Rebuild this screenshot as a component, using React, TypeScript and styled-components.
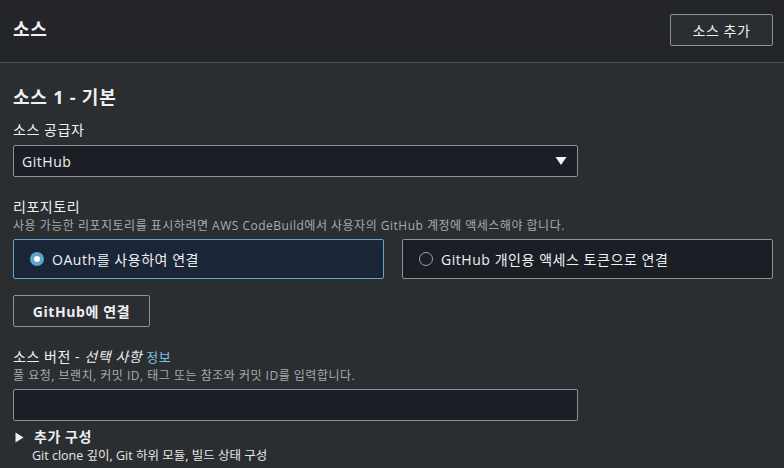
import React from 'react';
import styled, { createGlobalStyle } from 'styled-components';

const GlobalStyle = createGlobalStyle`
  html, body {
    margin: 0;
    padding: 0;
    background: #2b2e31;
  }
  body {
    font-family: "Open Sans", "Noto Sans CJK KR", sans-serif;
    color: #eef0f1;
    letter-spacing: 0.55px;
  }
`;

const Page = styled.div`
  width: 784px;
  height: 468px;
  overflow: hidden;
  background: #2b2e31;
`;

const Header = styled.div`
  box-sizing: border-box;
  height: 63px;
  padding: 0 11px 0 13px;
  display: flex;
  align-items: center;
  justify-content: space-between;
  background: #232529;
  border-bottom: 1px solid #4b4e52;
`;

const HeaderTitle = styled.h2`
  margin: 0 0 4px;
  font-size: 18px;
  font-weight: 700;
  line-height: 22px;
  letter-spacing: 0.8px;
`;

const Button = styled.button<{ $bold?: boolean; $width: number }>`
  box-sizing: border-box;
  width: ${(p) => p.$width}px;
  height: 32px;
  padding: 0;
  background: #2a2d31;
  border: 1px solid #8d9096;
  border-radius: 2px;
  color: #eef0f1;
  font-family: inherit;
  font-size: 14px;
  letter-spacing: 0.6px;
  font-weight: ${(p) => (p.$bold ? 700 : 400)};
  cursor: pointer;
`;

const HeaderButton = styled(Button)`
  margin-bottom: 2px;
`;

const Body = styled.div`
  padding: 23px 11px 0 13px;
  display: flex;
  flex-direction: column;
`;

const SectionTitle = styled.h3`
  margin: 0;
  font-size: 18px;
  font-weight: 700;
  line-height: 22px;
  letter-spacing: 0.8px;
`;

const Label = styled.div<{ $top: number }>`
  margin-top: ${(p) => p.$top}px;
  font-size: 14px;
  line-height: 20px;
`;

const Italic = styled.i`
  font-style: italic;
`;

const InfoLink = styled.a`
  color: #7fc0e0;
  font-size: 13px;
  margin-left: 4px;
  text-decoration: none;
`;

const Desc = styled.div`
  font-size: 12px;
  line-height: 18px;
  color: #a7abb0;
  letter-spacing: 0.5px;
`;

const Field = styled.div<{ $top: number }>`
  box-sizing: border-box;
  margin-top: ${(p) => p.$top}px;
  width: 565px;
  height: 32px;
  padding: 0 10px 0 8px;
  display: flex;
  align-items: center;
  justify-content: space-between;
  background: #1c1e25;
  border: 1px solid #8d9096;
  border-radius: 2px;
  font-size: 14px;
`;

const Cards = styled.div`
  margin-top: 4px;
  display: grid;
  grid-template-columns: 371px 371px;
  gap: 18px;
`;

const Card = styled.div<{ $selected?: boolean }>`
  box-sizing: border-box;
  height: 40px;
  padding: 0 16px;
  display: flex;
  align-items: center;
  gap: 8px;
  background: ${(p) => (p.$selected ? '#1b2538' : '#1c1e25')};
  border: 1px solid ${(p) => (p.$selected ? '#64a6c9' : '#8d9096')};
  border-radius: 2px;
  font-size: 14px;
`;

const Radio = styled.span<{ $checked?: boolean }>`
  box-sizing: border-box;
  width: 14px;
  height: 14px;
  border-radius: 50%;
  flex: none;
  display: flex;
  align-items: center;
  justify-content: center;
  background: ${(p) => (p.$checked ? '#5ea5cb' : 'transparent')};
  border: ${(p) => (p.$checked ? 'none' : '1.5px solid #9ea2a7')};

  &::after {
    content: '';
    display: ${(p) => (p.$checked ? 'block' : 'none')};
    width: 6px;
    height: 6px;
    border-radius: 50%;
    background: #ffffff;
  }
`;

const ActionRow = styled.div`
  margin-top: 16px;
`;

const Expander = styled.div`
  margin-top: 6px;
  display: flex;
  flex-direction: column;
`;

const ExpanderTitle = styled.div`
  display: flex;
  align-items: center;
  gap: 10px;
  font-size: 14px;
  font-weight: 700;
  line-height: 20px;
  padding-left: 2px;
`;

const ExpanderDesc = styled(Desc)`
  padding-left: 19px;
  color: #e4e6e8;
  font-size: 12.5px;
  letter-spacing: 0;
`;

const Caret = ({ dir }: { dir: 'down' | 'right' }) =>
  dir === 'down' ? (
    <svg width="12" height="10" viewBox="0 0 12 10">
      <path d="M0.5 1 L11.5 1 L6 9 Z" fill="#f2f3f4" />
    </svg>
  ) : (
    <svg width="9" height="11" viewBox="0 0 9 11">
      <path d="M0.5 0.5 L8.5 5.5 L0.5 10.5 Z" fill="#f2f3f4" />
    </svg>
  );

export default function App() {
  return (
    <Page>
      <GlobalStyle />
      <Header>
        <HeaderTitle>소스</HeaderTitle>
        <HeaderButton $width={103}>소스 추가</HeaderButton>
      </Header>
      <Body>
        <SectionTitle>소스 1 - 기본</SectionTitle>

        <Label $top={12}>소스 공급자</Label>
        <Field $top={5}>
          <span>GitHub</span>
          <Caret dir="down" />
        </Field>

        <Label $top={20}>리포지토리</Label>
        <Desc>사용 가능한 리포지토리를 표시하려면 AWS CodeBuild에서 사용자의 GitHub 계정에 액세스해야 합니다.</Desc>
        <Cards>
          <Card $selected>
            <Radio $checked />
            <span>OAuth를 사용하여 연결</span>
          </Card>
          <Card>
            <Radio />
            <span>GitHub 개인용 액세스 토큰으로 연결</span>
          </Card>
        </Cards>

        <ActionRow>
          <Button $bold $width={137}>GitHub에 연결</Button>
        </ActionRow>

        <Label $top={20}>
          소스 버전 - <Italic>선택 사항</Italic>
          <InfoLink>정보</InfoLink>
        </Label>
        <Desc>풀 요청, 브랜치, 커밋 ID, 태그 또는 참조와 커밋 ID를 입력합니다.</Desc>
        <Field $top={4} />

        <Expander>
          <ExpanderTitle>
            <Caret dir="right" />
            <span>추가 구성</span>
          </ExpanderTitle>
          <ExpanderDesc>Git clone 깊이, Git 하위 모듈, 빌드 상태 구성</ExpanderDesc>
        </Expander>
      </Body>
    </Page>
  );
}
